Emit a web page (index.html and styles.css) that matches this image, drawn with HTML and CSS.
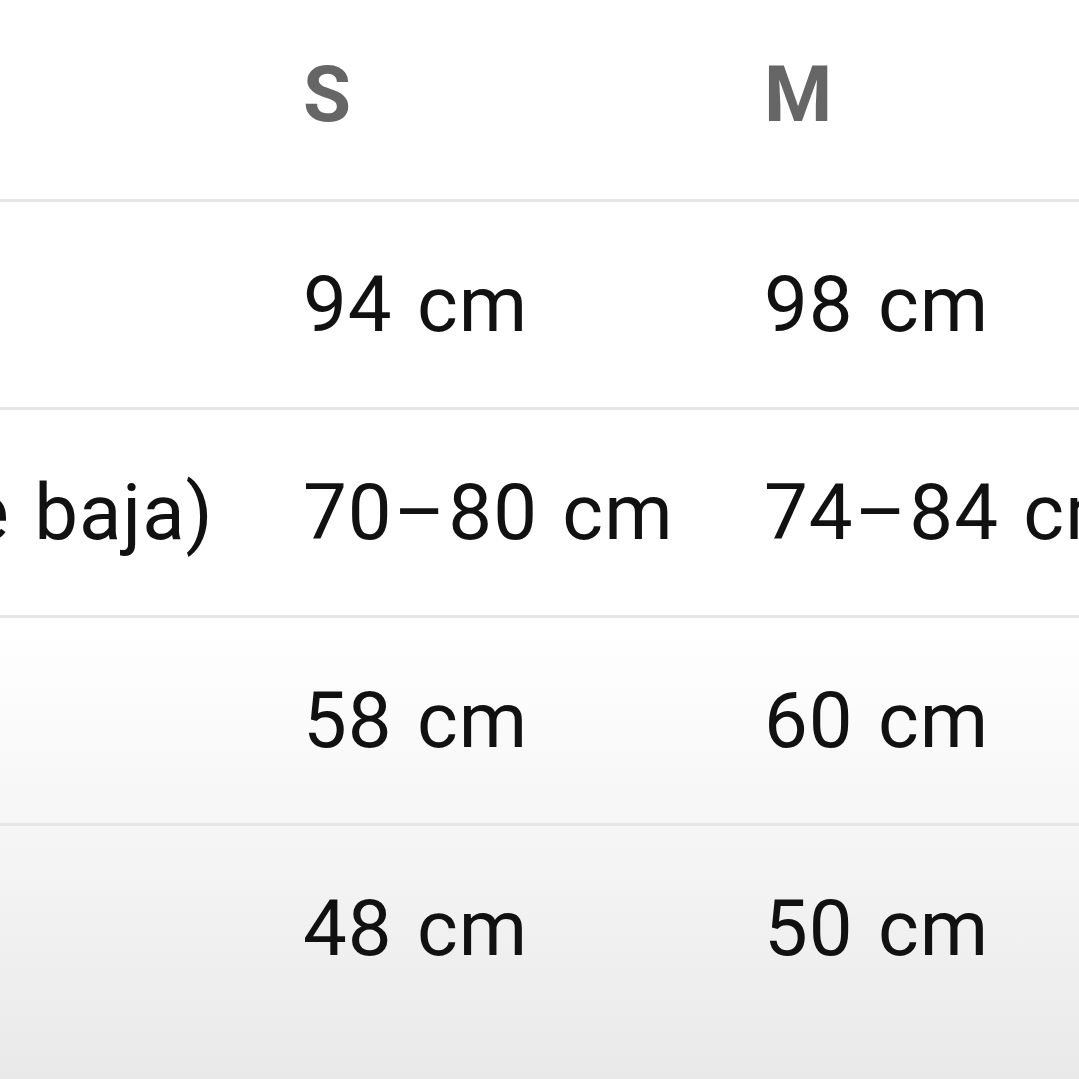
FILE: index.html
```html
<!DOCTYPE html>
<html lang="es">
<head>
    <meta charset="UTF-8">
    <meta name="viewport" content="width=device-width, initial-scale=1.0">
    <title>Guía de tallas</title>
    <link rel="stylesheet" href="styles.css">
</head>
<body>
    <div class="size-guide">
        <table class="size-table">
            <colgroup>
                <col class="col-label">
                <col class="col-size">
                <col class="col-size">
                <col class="col-size">
            </colgroup>
            <thead>
                <tr>
                    <th class="label">Medida</th>
                    <th>S</th>
                    <th>M</th>
                    <th>L</th>
                </tr>
            </thead>
            <tbody>
                <tr>
                    <td class="label">Pecho</td>
                    <td>94 cm</td>
                    <td>98 cm</td>
                    <td>102 cm</td>
                </tr>
                <tr>
                    <td class="label">Cintura (talle baja)</td>
                    <td>70<span class="dash">−</span>80 cm</td>
                    <td>74<span class="dash">−</span>84 cm</td>
                    <td>78<span class="dash">−</span>88 cm</td>
                </tr>
                <tr>
                    <td class="label">Largo</td>
                    <td>58 cm</td>
                    <td>60 cm</td>
                    <td>62 cm</td>
                </tr>
                <tr>
                    <td class="label">Hombros</td>
                    <td>48 cm</td>
                    <td>50 cm</td>
                    <td>52 cm</td>
                </tr>
            </tbody>
        </table>
    </div>
</body>
</html>
```

FILE: styles.css
```css
html, body {
    margin: 0;
    padding: 0;
    height: 100%;
}
body {
    font-family: Roboto, "Liberation Sans", sans-serif;
    background: linear-gradient(to bottom, #ffffff 0%, #ffffff 58%, #f4f4f4 80%, #e9e9e9 100%);
    overflow: hidden;
}
.size-guide {
    width: 100%;
    height: 100%;
    overflow: hidden;
}
.size-table {
    table-layout: fixed;
    border-collapse: collapse;
    width: 2133px;
    margin-left: -450px;
}
.col-label {
    width: 753px;
}
.col-size {
    width: 461px;
}
.size-table th,
.size-table td {
    padding: 0;
    text-align: left;
    vertical-align: middle;
    white-space: nowrap;
    font-size: 78px;
}
.size-table th {
    height: 189px;
    padding-bottom: 10px;
    color: #666666;
    font-weight: 700;
    border-bottom: 3px solid #e6e6e6;
}
.size-table th.label {
    color: transparent;
}
.size-table td {
    height: 205px;
    color: #111111;
    font-weight: 400;
    letter-spacing: 1px;
    word-spacing: 4px;
    border-bottom: 3px solid #e6e6e6;
}
.size-table tbody tr:last-child td {
    border-bottom: none;
}
.dash {
    display: inline-block;
    margin: 0 6px 0 4px;
    transform: scaleX(1.2);
}
```
